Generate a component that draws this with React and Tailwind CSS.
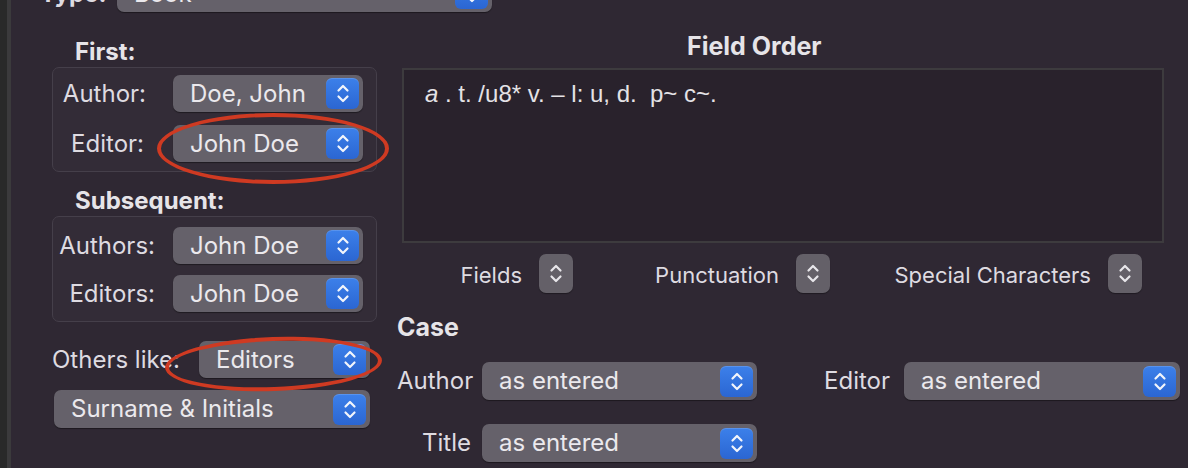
import React from 'react';

const font = { fontFamily: 'Inter, "Noto Sans", sans-serif' };

const Chevrons = ({ className = '' }) => (
    <svg width="14" height="21" viewBox="0 0 14 21" className={className} fill="none" stroke="currentColor" strokeWidth="2.2" strokeLinecap="round" strokeLinejoin="round">
        <path d="M2.5 7.5 L7 3 L11.5 7.5" />
        <path d="M2.5 13.5 L7 18 L11.5 13.5" />
    </svg>
);

const BlueStepper = () => (
    <div className="w-[33px] h-[31px] shrink-0 rounded-[6px] bg-gradient-to-b from-[#3c80ea] to-[#2b66d2] text-[#f2f5fb] flex items-center justify-center shadow-[inset_0_1px_0_rgba(255,255,255,0.15)]">
        <Chevrons />
    </div>
);

const GrayStepper = () => (
    <div className="w-[34px] h-[39px] shrink-0 rounded-[7px] bg-[#646068] text-[#e8e6ea] flex items-center justify-center shadow-[0_1px_1px_rgba(0,0,0,0.35)]">
        <Chevrons />
    </div>
);

const Popup = ({ value, className = '' }) => (
    <div className={`h-[37px] rounded-[7px] bg-[#65616a] shadow-[0_1px_1px_rgba(0,0,0,0.4)] flex items-center pl-[17px] pr-[4px] ${className}`}>
        <span className="flex-1 text-[24px] leading-none text-[#ebe9ed] whitespace-nowrap">{value}</span>
        <BlueStepper />
    </div>
);

const Heading = ({ children, className = '' }) => (
    <div className={`h-[24px] leading-[24px] font-bold text-[#e6e4e8] whitespace-nowrap ${className}`}>{children}</div>
);

const BoxRow = ({ label, value, labelWidth }) => (
    <div className="flex items-center h-[37px]">
        <span className={`${labelWidth} text-right text-[24px] text-[#dedbe1] whitespace-nowrap`}>{label}</span>
        <Popup value={value} className="ml-auto mr-[13px] w-[190px]" />
    </div>
);

const GroupBox = ({ children, className = '' }) => (
    <div className={`w-[325px] rounded-[7px] border border-[#453f4a] bg-[#332c37] flex flex-col ${className}`}>
        {children}
    </div>
);

const StepperGroup = ({ label, width }) => (
    <div className={`${width} flex items-center justify-end gap-[17px]`}>
        <span className="text-[22px] text-[#dedbe1] whitespace-nowrap translate-y-[2px]">{label}</span>
        <GrayStepper />
    </div>
);

export default function App() {
    return (
        <div className="relative w-[1188px] h-[468px] overflow-hidden bg-[#2f2833] flex" style={font}>
            {/* window edge on the left */}
            <div className="w-[7px] h-full bg-[#292929] shrink-0" />
            <div className="w-[4px] h-full bg-[#3b3a3c] shrink-0" />

            <div className="flex-1 flex flex-col">
                {/* Type row, cut off at the top */}
                <div className="h-[37px] mt-[-25px] flex items-center pl-[29px]">
                    <span className="text-[24px] font-bold text-[#dedbe1] w-[77px]">Type:</span>
                    <Popup value="Book" className="w-[375px]" />
                </div>

                <div className="flex">
                    {/* left column */}
                    <div className="w-[386px] pl-[41px] flex flex-col">
                        <Heading className="mt-[28px] pl-[23px] text-[24px]">First:</Heading>
                        <GroupBox className="mt-[3px] h-[105px] pt-[7px] gap-[13px]">
                            <BoxRow label="Author:" value="Doe, John" labelWidth="w-[93px]" />
                            <BoxRow label="Editor:" value="John Doe" labelWidth="w-[91px]" />
                        </GroupBox>

                        <Heading className="mt-[17px] pl-[23px] text-[24px]">Subsequent:</Heading>
                        <GroupBox className="mt-[3px] h-[106px] pt-[10px] gap-[11px]">
                            <BoxRow label="Authors:" value="John Doe" labelWidth="w-[102px]" />
                            <BoxRow label="Editors:" value="John Doe" labelWidth="w-[102px]" />
                        </GroupBox>

                        <div className="mt-[19px] h-[37px] flex items-center">
                            <span className="text-[24px] text-[#dedbe1] whitespace-nowrap">Others like:</span>
                            <Popup value="Editors" className="ml-auto mr-[27px] w-[171px]" />
                        </div>
                        <Popup value="Surname & Initials" className="mt-[12px] w-[316px] h-[38px] ml-[2px]" />
                    </div>

                    {/* right column */}
                    <div className="flex-1 flex flex-col">
                        <Heading className="mt-[22px] pl-[290px] text-[25px]">Field Order</Heading>
                        <div className="mt-[10px] ml-[5px] w-[762px] h-[175px] border-2 border-[#3d3b3e] bg-[#29222c] pl-[21px] pt-[12px]">
                            <p className="text-[24px] leading-none text-[#e4e2e6] whitespace-pre" style={{ fontFamily: '"Liberation Sans", Arial, sans-serif' }}>
                                <i>a</i> . t. /u8* v. – l: u, d.  p~ c~.
                            </p>
                        </div>

                        <div className="mt-[11px] h-[39px] flex">
                            <StepperGroup label="Fields" width="w-[176px]" />
                            <StepperGroup label="Punctuation" width="w-[257px]" />
                            <StepperGroup label="Special Characters" width="w-[312px]" />
                        </div>

                        <Heading className="mt-[22px] text-[25px]">Case</Heading>

                        <div className="mt-[23px] h-[38px] flex items-center">
                            <span className="w-[74px] text-right text-[24px] text-[#dedbe1]">Author</span>
                            <Popup value="as entered" className="ml-[11px] w-[275px] h-[38px]" />
                            <span className="w-[133px] text-right text-[24px] text-[#dedbe1]">Editor</span>
                            <Popup value="as entered" className="ml-[14px] w-[276px] h-[38px]" />
                        </div>

                        <div className="mt-[24px] h-[38px] flex items-center">
                            <span className="w-[74px] text-right text-[24px] text-[#dedbe1]">Title</span>
                            <Popup value="as entered" className="ml-[11px] w-[275px] h-[38px]" />
                        </div>
                    </div>
                </div>
            </div>

            {/* red annotation ellipses drawn over the controls */}
            <div className="absolute left-[157px] top-[113px] w-[232px] h-[71px] rounded-[50%] border-[4px] border-[#cf3a22] pointer-events-none" />
            <div className="absolute left-[165px] top-[337px] w-[217px] h-[54px] rounded-[50%] border-[4px] border-[#cf3a22] pointer-events-none -rotate-[2deg]" />
        </div>
    );
}
